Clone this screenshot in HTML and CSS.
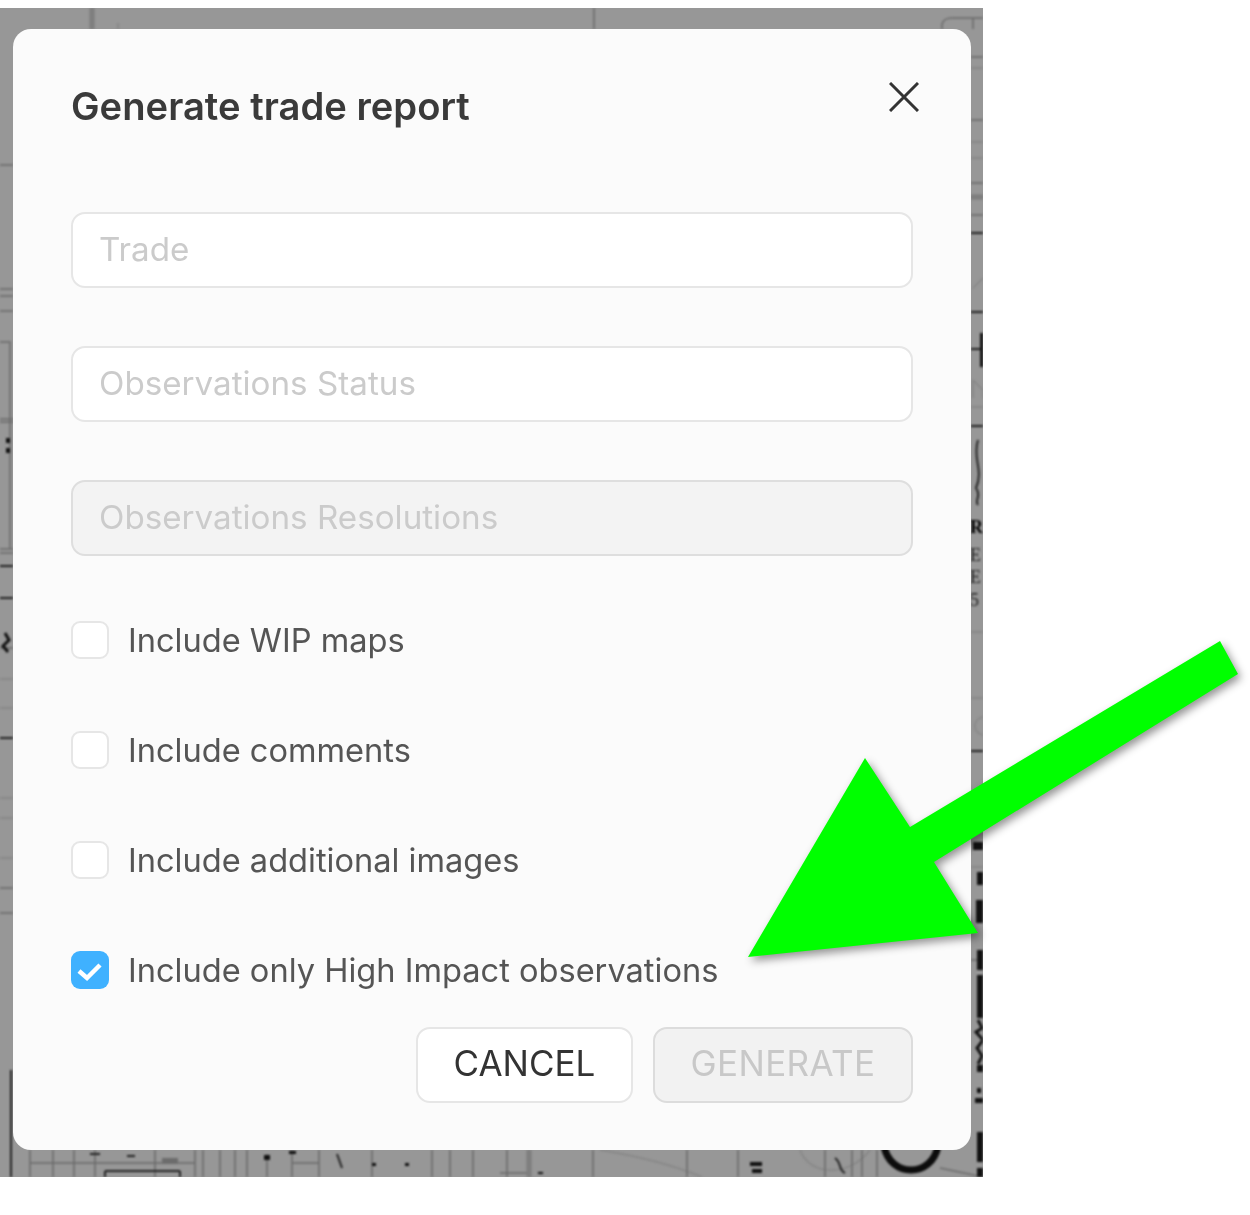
FILE: index.html
```html
<!DOCTYPE html>
<html lang="en">
<head>
<meta charset="utf-8">
<title>Generate trade report</title>
<link rel="stylesheet" href="styles.css">
</head>
<body>
<div class="stage">
  <svg class="plan" viewBox="0 0 983 1169" width="983" height="1169" aria-hidden="true">
    <g class="faint">
      <path d="M118 15V21M971 60H983M971 134H983M971 150H983M971 399H983M971 624H983M971 690H983M971 859H983M0 671H13M0 700H13M0 790H13M0 810H13M0 850H13"/>
      <path d="M983 709C972 711 972 725 983 727"/>
      <path d="M973 372L983 382V390M973 372V390M600 1142C650 1150 680 1160 702 1169M800 1142C810 1169 850 1169 870 1142"/>
      <path d="M973 280L983 270"/>
    </g>
    <g class="thin">
      <path d="M594 0V21M942 21V16Q944 10 952 10H983M973 10V21M0 157H13M0 281H13M0 288H13M0 303H13M0 411H13M0 414H13M0 541H13M0 545H13M0 640H13M0 880H13M0 905H13"/>
      <path d="M971 49H983M971 112H983M971 175H983M971 207H983M0 334H10V541M971 952H983"/>
      <path d="M30 1142V1169M30 1155H195M53 1142V1169M74 1142V1169M95 1142V1169M155 1142V1169M195 1142V1169M203 1142V1169M220 1142V1169M235 1142V1169M247 1142V1169M267 1146V1169M292 1142V1169M292 1155H319M319 1142V1169M372 1142V1169M432 1142V1169M450 1142V1169M473 1142V1169M500 1165H530M507 1142V1169M593 1142V1169M687 1142V1169M738 1142V1169M825 1142V1169M852 1142V1169M862 1142V1169M877 1142V1169M940 1160L983 1169"/>
    </g>
    <g class="band">
      <path d="M92 0V21M529 1142V1169M971 189H983"/>
    </g>
    <g class="dark">
      <path d="M11 1062V1169M118 1163H180M105 1163H118M105 1163V1169M180 1163V1169M127 1148H135M90 1146H100M971 304H983M971 341H983M971 418H983M971 743H983M0 558H13M0 590H13M0 730H13M971 225H983"/>
      <path d="M978 432C972 450 984 462 976 480C982 488 974 492 978 497M337 1146L342 1160M835 1150C842 1155 838 1162 845 1165"/>
      <path class="scribble" d="M978 1012L982 1020L976 1024L983 1032L977 1040L982 1048L978 1056M5 625L9 632L3 638L8 644"/>
      <path class="ring" d="M884 1138C890 1170 932 1170 938 1138"/>
    </g>
    <g class="marks">
      <text x="970" y="512" class="t-b">R</text>
      <text x="970" y="540" class="t">E</text>
      <text x="970" y="562" class="t">E</text>
      <text x="970" y="585" class="t">5</text>
      <rect x="980" y="325" width="3" height="34"/>
      <rect x="973" y="834" width="10" height="8"/>
      <rect x="977" y="864" width="6" height="13"/>
      <rect x="976" y="892" width="7" height="23"/>
      <rect x="977" y="942" width="6" height="20"/>
      <rect x="977" y="967" width="6" height="43"/>
      <rect x="977" y="1057" width="6" height="7"/>
      <rect x="977" y="1080" width="4" height="5"/>
      <rect x="975" y="1090" width="8" height="5"/>
      <rect x="977" y="1124" width="6" height="30"/>
      <rect x="977" y="1160" width="6" height="9"/>
      <rect x="6" y="430" width="4" height="5"/>
      <rect x="6" y="440" width="4" height="5"/>
      <rect x="162" y="1150" width="16" height="6" class="gray"/>
      <rect x="264" y="1147" width="6" height="5"/>
      <rect x="289" y="1143" width="7" height="3"/>
      <rect x="372" y="1155" width="4" height="3"/>
      <rect x="405" y="1155" width="4" height="3"/>
      <rect x="538" y="1164" width="5" height="2"/>
      <rect x="750" y="1154" width="12" height="4"/>
      <rect x="752" y="1161" width="10" height="4"/>
    </g>
  </svg>
  <section class="modal">
    <header class="modal-head">
      <h1 class="modal-title">Generate trade report</h1>
      <button class="close" type="button" aria-label="Close">
        <svg viewBox="0 0 30 30" width="30" height="30"><path d="M1 1L29 29M29 1L1 29"/></svg>
      </button>
    </header>
    <div class="fields">
      <div class="field">Trade</div>
      <div class="field">Observations Status</div>
      <div class="field field-disabled">Observations Resolutions</div>
    </div>
    <div class="checks">
      <div class="check"><span class="box"></span><span>Include WIP maps</span></div>
      <div class="check"><span class="box"></span><span>Include comments</span></div>
      <div class="check"><span class="box"></span><span>Include additional images</span></div>
      <div class="check"><span class="box box-on"><svg viewBox="0 0 38 38" width="38" height="38"><path d="M8 20L16 27L29 14"/></svg></span><span>Include only High Impact observations</span></div>
    </div>
    <footer class="actions">
      <button class="btn" type="button">CANCEL</button>
      <button class="btn btn-disabled" type="button">GENERATE</button>
    </footer>
  </section>
</div>
<svg class="arrow" viewBox="0 0 1250 1215" width="1250" height="1215" aria-hidden="true">
  <polygon points="748,957 865,758 910,827 1220,641 1238,674 934,862 978,933"/>
</svg>
</body>
</html>
```
FILE: styles.css
```css
html, body { margin: 0; padding: 0; background: #fff; }
body { width: 1250px; height: 1215px; padding-top: 8px; box-sizing: border-box; overflow: hidden; position: relative; font-family: Inter, "Liberation Sans", sans-serif; }
.stage { width: 983px; height: 1169px; background: #979797; position: relative; overflow: hidden; padding: 21px 12px 27px 13px; box-sizing: border-box; }
.plan { position: absolute; left: 0; top: 0; filter: blur(0.8px); }
.plan path { fill: none; }
.faint path { stroke: #858585; stroke-width: 1.5; }
.thin path { stroke: #6a6a6a; stroke-width: 1.5; }
.band path { stroke: #7d7d7d; stroke-width: 5; }
.dark path { stroke: #222; stroke-width: 2; }
.dark .scribble { stroke: #111; stroke-width: 3; }
.dark .ring { stroke: #0c0c0c; stroke-width: 7; }
.marks rect { fill: #111; }
.marks .gray { fill: #6c6c6c; }
.marks text { font-family: "Liberation Serif", serif; font-size: 18px; fill: #222; dominant-baseline: hanging; }
.marks .t-b { font-weight: 700; fill: #000; }
.modal { position: relative; height: 1121px; background: #fbfbfb; border-radius: 18px; padding: 0 58px; box-sizing: border-box; color: #444; filter: blur(0.5px); }
.modal-head { display: flex; justify-content: space-between; align-items: flex-start; height: 183px; }
.modal-title { margin: 53px 0 0; font-size: 38.2px; line-height: 48px; font-weight: 600; color: #3a3a3a; }
.close { margin: 53px -6px 0 0; width: 30px; height: 30px; padding: 0; border: 0; background: none; }
.close svg { display: block; }
.close path { fill: none; stroke: #333; stroke-width: 3; }
.fields { display: flex; flex-direction: column; gap: 58px; }
.field { height: 76px; box-sizing: border-box; border: 2px solid #e6e6e6; border-radius: 14px; background: #fff; padding: 0 0 2px 26px; display: flex; align-items: center; font-size: 33.2px; color: #cbcbcb; }
.field-disabled { background: #f3f3f3; border-color: #dedede; }
.checks { display: flex; flex-direction: column; gap: 72px; margin-top: 65px; }
.check { display: flex; align-items: center; gap: 19px; height: 38px; font-size: 32.6px; color: #555; }
.box { width: 38px; height: 38px; box-sizing: border-box; border: 2px solid #e6e6e6; border-radius: 9px; background: #fff; flex: none; }
.box-on { background: #3fb1ff; border: 0; }
.box-on svg { display: block; }
.box-on path { fill: none; stroke: #fff; stroke-width: 4.5; }
.actions { display: flex; justify-content: flex-end; gap: 20px; margin-top: 38px; }
.btn { height: 76px; box-sizing: border-box; border: 2px solid #e6e6e6; border-radius: 14px; background: #fff; font: inherit; font-size: 35px; color: #333; padding: 0 0 4px; width: 217px; }
.btn-disabled { width: 260px; background: #f2f2f2; border-color: #dcdcdc; color: #c8c8c8; letter-spacing: 0.4px; }
.arrow { position: absolute; left: 0; top: 0; filter: drop-shadow(3px 4px 4px rgba(0,0,0,.42)); }
.arrow polygon { fill: #00ff00; }
```
